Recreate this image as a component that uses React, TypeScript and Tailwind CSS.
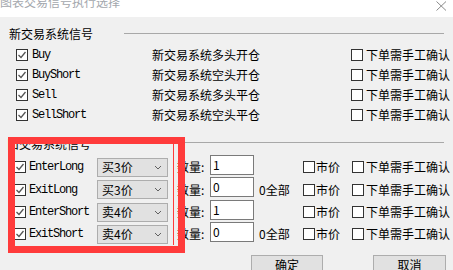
import React from "react";

const CJK = { fontFamily: '"Noto Sans CJK SC", "Noto Sans", sans-serif' };
const MONO = { fontFamily: '"Liberation Mono", "DejaVu Sans Mono", monospace' };

function Box({ checked }: { checked?: boolean }) {
  return (
    <span className="w-[12px] h-[12px] shrink-0 border border-[#333333] bg-white flex items-center justify-center">
      {checked && (
        <svg width="10" height="10" viewBox="0 0 10 10">
          <path d="M1.5 5 L4 7.5 L8.5 2" fill="none" stroke="#555555" strokeWidth="1.3" />
        </svg>
      )}
    </span>
  );
}

function Select({ value }: { value: string }) {
  return (
    <div className="w-[71px] h-[19px] shrink-0 border border-[#adadad] bg-[#e1e1e1] flex items-center pl-[4px] pr-[4px] justify-between">
      <span className="text-[12px] leading-[12px] text-black">{value}</span>
      <svg width="8" height="5" viewBox="0 0 8 5" className="mr-[1px]">
        <path d="M1 1 L4 4 L7 1" fill="none" stroke="#606060" strokeWidth="1" />
      </svg>
    </div>
  );
}

const newRows = [
  ["Buy", "新交易系统多头开仓"],
  ["BuyShort", "新交易系统空头开仓"],
  ["Sell", "新交易系统多头平仓"],
  ["SellShort", "新交易系统空头平仓"],
];

const oldRows = [
  { name: "EnterLong", sel: "买3价", qty: "1", all: false, h: "h-[22px]" },
  { name: "ExitLong", sel: "买3价", qty: "0", all: true, h: "h-[23px]" },
  { name: "EnterShort", sel: "卖4价", qty: "1", all: false, h: "h-[22px]" },
  { name: "ExitShort", sel: "卖4价", qty: "0", all: true, h: "h-[22px]" },
];

export default function App() {
  return (
    <div
      className="relative w-[453px] h-[270px] overflow-hidden bg-[#f0f0f0] text-black text-[12px] leading-[12px] flex flex-col"
      style={CJK}
    >
      {/* title bar */}
      <div className="h-[17px] shrink-0 bg-white flex items-start justify-between overflow-hidden">
        <span className="-mt-[4px] text-[12px] leading-[12px] text-[#a3a7ad]">图表交易信号执行选择</span>
        <svg width="11" height="10" viewBox="0 0 11 10" className="mt-[1px] mr-[6px]">
          <path d="M0.5 0.5 L10 9.5 M10 0.5 L0.5 9.5" stroke="#8a8a8a" strokeWidth="1" fill="none" />
        </svg>
      </div>

      {/* group 1 header */}
      <div className="mt-[11px] h-[12px] flex items-start">
        <span className="pl-[9px] w-[124px] shrink-0">新交易系统信号</span>
        <span className="flex-1 mr-[9px] mt-[5px] h-px bg-[#a8a8a8]" />
      </div>

      {/* group 1 rows */}
      <div className="mt-[5px] flex flex-col">
        {newRows.map(([n, d]) => (
          <div key={n} className="h-[20px] flex items-center pl-[16px]">
            <Box checked />
            <span className="ml-[4px] w-[120px] shrink-0 text-[12px] tracking-[-1.2px]" style={MONO}>
              {n}
            </span>
            <span className="w-[199px] shrink-0">{d}</span>
            <Box />
            <span className="ml-[3px]">下单需手工确认</span>
          </div>
        ))}
      </div>

      {/* group 2 header */}
      <div className="mt-[13px] h-[12px] flex items-start">
        <span className="pl-[7px] w-[124px] shrink-0">旧交易系统信号</span>
        <span className="flex-1 mr-[9px] mt-[4px] h-px bg-[#a8a8a8]" />
      </div>

      {/* group 2 rows */}
      <div className="mt-[6px] flex flex-col">
        {oldRows.map((r) => (
          <div key={r.name} className={`${r.h} flex items-center pl-[14px]`}>
            <Box checked />
            <span className="ml-[3px] w-[68px] shrink-0 text-[12px] tracking-[-1.2px]" style={MONO}>
              {r.name}
            </span>
            <Select value={r.sel} />
            <span className="ml-[9px] w-[33px] shrink-0">数量:</span>
            <div className="self-start -mt-[1px] w-[44px] h-[20px] shrink-0 border border-[#7a7a7a] bg-white pl-[2px] pt-[2px] leading-[13px]">
              {r.qty}
            </div>
            <span className="ml-[5px] w-[44px] shrink-0">{r.all ? "0全部" : ""}</span>
            <Box />
            <span className="ml-[1px] w-[36px] shrink-0">市价</span>
            <Box />
            <span className="ml-[2px]">下单需手工确认</span>
          </div>
        ))}
      </div>

      {/* buttons */}
      <div className="mt-[10px] flex">
        <div className="ml-[251px] w-[72px] h-[23px] border border-[#adadad] bg-[#e1e1e1] flex justify-center pt-[3px]">
          确定
        </div>
        <div className="ml-[50px] w-[73px] h-[23px] border border-[#adadad] bg-[#e1e1e1] flex justify-center pt-[3px]">
          取消
        </div>
      </div>

      {/* red annotation overlay */}
      <div className="absolute left-[8px] top-[137px] w-[177px] h-[116px] border-[7px] border-[#ff3b3b]" />
      <div className="absolute left-[173px] top-[144px] w-px h-[101px] bg-[#ff3b3b]" />
    </div>
  );
}
